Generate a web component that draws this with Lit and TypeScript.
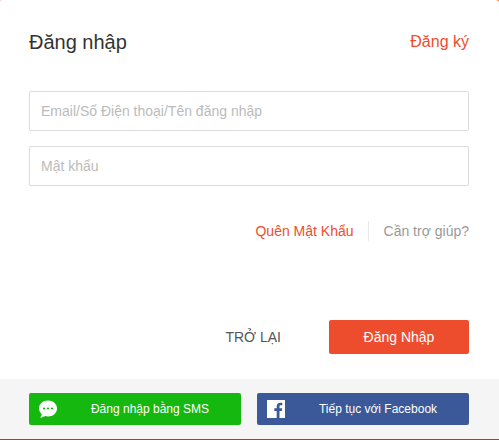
import { LitElement, html, css } from "lit";
import { customElement } from "lit/decorators.js";

@customElement("app-root")
export class AppRoot extends LitElement {
  static styles = css`
    :host { display: block; width: 499px; height: 440px; font-family: "Liberation Sans", Arial, sans-serif; overflow: hidden;
      background: linear-gradient(#a8421f, #a8421f) left bottom / 100% 10px no-repeat, linear-gradient(90deg, #fbd5c8, #ee6a3c); }
    .card { height: 439px; background: #fff; display: flex; flex-direction: column; border-radius: 3px 3px 0 0; box-sizing: border-box; }
    .main { flex: 1; padding: 30px 30px 0 29px; display: flex; flex-direction: column; }
    .head { display: flex; justify-content: space-between; align-items: center; height: 24px; margin-bottom: 37px; }
    .title { font-size: 20px; color: #333; }
    .link { font-size: 16px; color: #ee4d2d; }
    .input { height: 40px; box-sizing: border-box; border: 1px solid #dbdbdb; border-radius: 2px; padding: 0 11px; display: flex; align-items: center; font-size: 14px; color: #bbb; margin-bottom: 15px; }
    .help { display: flex; justify-content: flex-end; align-items: center; font-size: 14px; margin-top: 20px; height: 20px; }
    .help .f { color: #ee4d2d; margin-right: -1px; }
    .help .sep { width: 1px; height: 20px; background: #e8e8e8; margin: 0 15px; }
    .help .h { color: #999; }
    .actions { display: flex; justify-content: flex-end; align-items: center; margin-top: 79px; }
    .back { font-size: 14px; color: #555; margin-right: 48px; }
    .submit { width: 140px; height: 34px; background: #ee4d2d; color: #fff; border-radius: 2px; display: flex; align-items: center; justify-content: center; font-size: 14px; }
    .foot { height: 60px; background: #f5f5f5; padding: 14px 30px 0 29px; box-sizing: border-box; display: flex; gap: 16px; }
    .social { width: 212px; height: 32px; border-radius: 2px; color: #fff; font-size: 12px; display: flex; align-items: center; }
    .sms { background: #15b80f; }
    .fb { background: #3b5998; }
    .social svg { margin-left: 10px; flex: none; }
    .social span { flex: 1; text-align: center; padding-left: 2px; }
  `;
  render() {
    return html`<div class="card">
      <div class="main">
        <div class="head"><div class="title">Đăng nhập</div><div class="link">Đăng ký</div></div>
        <div class="input">Email/Số Điện thoại/Tên đăng nhập</div>
        <div class="input">Mật khẩu</div>
        <div class="help"><span class="f">Quên Mật Khẩu</span><span class="sep"></span><span class="h">Cần trợ giúp?</span></div>
        <div class="actions"><div class="back">TRỞ LẠI</div><div class="submit">Đăng Nhập</div></div>
      </div>
      <div class="foot">
        <div class="social sms">
          <svg width="18" height="18" viewBox="0 0 18 18"><path fill="#fff" d="M9 .5c5 0 9 3.400 9 8s-4 8-9 8c-1 0-2-.1-2.900-.4C4.700 17 2.700 17.700 .8 17.600c1-.8 1.800-2 2-3.400C1.100 12.700 0 10.700 0 8.500 0 3.900 4 .5 9 .5z"/><circle cx="5" cy="8.500" r="1.100" fill="#15b80f"/><circle cx="9" cy="8.500" r="1.100" fill="#15b80f"/><circle cx="13" cy="8.500" r="1.100" fill="#15b80f"/></svg>
          <span>Đăng nhập bằng SMS</span>
        </div>
        <div class="social fb">
          <svg width="18" height="18" viewBox="0 0 18 18"><path fill="#fff" d="M0 0h18v18H12.500v-7h2.300l.4-2.700h-2.700V6.600c0-.8.200-1.300 1.300-1.300h1.500V2.900c-.3 0-1.100-.1-2.100-.1-2.100 0-3.500 1.300-3.500 3.600v1.900H7.300V11h2.400v7H0z"/></svg>
          <span>Tiếp tục với Facebook</span>
        </div>
      </div>
    </div>`;
  }
}
